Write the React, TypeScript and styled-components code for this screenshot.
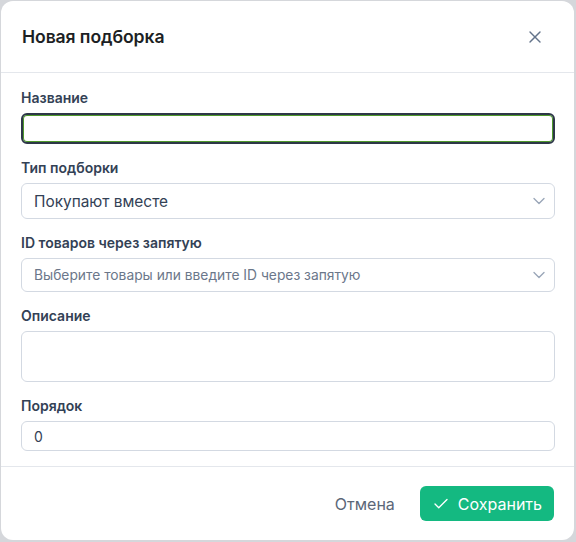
import React from 'react'
import styled, { createGlobalStyle } from 'styled-components'
import { Check, ChevronDown, X } from 'lucide-react'

const GlobalStyle = createGlobalStyle`
	html, body {
		margin: 0;
		padding: 0;
		background: #d5d7db;
		font-family: Inter, "Noto Sans", sans-serif;
	}
	* {
		box-sizing: border-box;
	}
`;

const Backdrop = styled.div`
	width: 576px;
	height: 542px;
	padding: 1px 2px 2px 1px;
`;

const Modal = styled.div`
	width: 100%;
	height: 100%;
	background: #ffffff;
	border-radius: 12px;
	display: flex;
	flex-direction: column;
	overflow: hidden;
`;

const Header = styled.div`
	height: 72px;
	flex: none;
	display: flex;
	align-items: center;
	justify-content: space-between;
	padding: 0 25px 0 21px;
	border-bottom: 1px solid #e4e7ec;
`;

const Title = styled.h2`
	margin: 0;
	font-size: 17.6px;
	font-weight: 600;
	color: #1c1f24;
	letter-spacing: -0.1px;
`;

const CloseButton = styled.button`
	border: none;
	background: none;
	padding: 4px;
	display: flex;
	color: #64748b;
	cursor: pointer;
`;

const Body = styled.div`
	flex: 1;
	display: flex;
	flex-direction: column;
	gap: 14px;
	padding: 15px 19px 0 20px;
`;

const Field = styled.div`
	display: flex;
	flex-direction: column;
	gap: 5px;
`;

const Label = styled.label`
	font-size: 14px;
	line-height: 20px;
	font-weight: 600;
	color: #334155;
`;

const Control = styled.div<{ $height: number; $focused?: boolean; $select?: boolean }>`
	height: ${p => p.$height}px;
	display: flex;
	align-items: center;
	justify-content: space-between;
	padding: 0 ${p => (p.$select ? 5 : 14)}px 0 12px;
	border-radius: 6px;
	border: ${p => (p.$focused ? '2px solid #2d3748' : '1px solid #d3d9e2')};
	box-shadow: ${p => (p.$focused ? 'inset 0 0 0 1px #4f9a2c' : 'none')};
	background: #ffffff;
`;

const Value = styled.span<{ $size: number; $muted?: boolean }>`
	font-size: ${p => p.$size}px;
	color: ${p => (p.$muted ? '#6b778a' : '#334155')};
`;

const Footer = styled.div`
	height: 74px;
	flex: none;
	display: flex;
	align-items: center;
	justify-content: flex-end;
	gap: 13px;
	padding: 0 20px;
	border-top: 1px solid #e4e7ec;
`;

const GhostButton = styled.button`
	border: none;
	background: none;
	padding: 0 12px;
	height: 35px;
	font-family: inherit;
	font-size: 16px;
	color: #5b6778;
	cursor: pointer;
`;

const PrimaryButton = styled.button`
	border: none;
	background: #14b981;
	color: #ffffff;
	border-radius: 6px;
	height: 35px;
	padding: 0 12px 0 12px;
	display: flex;
	align-items: center;
	gap: 8px;
	font-family: inherit;
	font-size: 16px;
	cursor: pointer;
`;

const Chevron = () => <ChevronDown size={20} color="#9aa6b8" strokeWidth={1.6} />;

export default function App() {
	return (
		<>
			<GlobalStyle />
			<Backdrop>
				<Modal>
					<Header>
						<Title>Новая подборка</Title>
						<CloseButton>
							<X size={20} strokeWidth={1.7} />
						</CloseButton>
					</Header>
					<Body>
						<Field>
							<Label>Название</Label>
							<Control $height={31} $focused />
						</Field>
						<Field>
							<Label>Тип подборки</Label>
							<Control $height={36} $select>
								<Value $size={15.4}>Покупают вместе</Value>
								<Chevron />
							</Control>
						</Field>
						<Field>
							<Label>ID товаров через запятую</Label>
							<Control $height={34} $select>
								<Value $size={13.8} $muted>
									Выберите товары или введите ID через запятую
								</Value>
								<Chevron />
							</Control>
						</Field>
						<Field>
							<Label>Описание</Label>
							<Control $height={51} />
						</Field>
						<Field>
							<Label>Порядок</Label>
							<Control $height={30}>
								<Value $size={14}>0</Value>
							</Control>
						</Field>
					</Body>
					<Footer>
						<GhostButton>Отмена</GhostButton>
						<PrimaryButton>
							<Check size={18} strokeWidth={1.8} />
							Сохранить
						</PrimaryButton>
					</Footer>
				</Modal>
			</Backdrop>
		</>
	);
}
